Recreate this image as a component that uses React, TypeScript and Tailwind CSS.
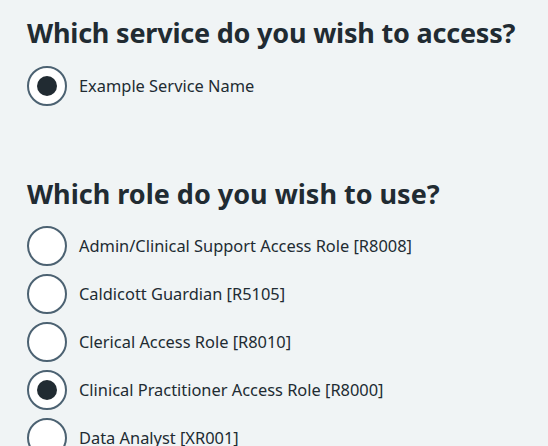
import React, { useState } from "react";

type Option = { id: string; label: string };

const services: Option[] = [{ id: "svc-1", label: "Example Service Name" }];

const roles: Option[] = [
  { id: "R8008", label: "Admin/Clinical Support Access Role [R8008]" },
  { id: "R5105", label: "Caldicott Guardian [R5105]" },
  { id: "R8010", label: "Clerical Access Role [R8010]" },
  { id: "R8000", label: "Clinical Practitioner Access Role [R8000]" },
  { id: "XR001", label: "Data Analyst [XR001]" },
];

const Radio: React.FC<{ option: Option; checked: boolean; onSelect: () => void }> = ({ option, checked, onSelect }) => (
  <label className="flex items-center h-[48px] cursor-pointer" onClick={onSelect}>
    <span className="w-[40px] h-[40px] shrink-0 rounded-full border-2 border-[#4c6272] bg-white flex items-center justify-center">
      {checked && <span className="w-[20px] h-[20px] rounded-full bg-[#212b32]" />}
    </span>
    <span className="ml-[12px] text-[16.4px] leading-[24px] text-[#212b32] whitespace-nowrap">{option.label}</span>
  </label>
);

const App: React.FC = () => {
  const [service, setService] = useState<string>("svc-1");
  const [role, setRole] = useState<string>("R8000");

  return (
    <div className="h-[446px] overflow-hidden bg-[#f0f4f5] px-[27px] pt-[13px]" style={{ fontFamily: '"Noto Sans", Arial, sans-serif' }}>
      <h1 className="text-[27px] leading-[40px] font-bold tracking-[-0.2px] text-[#212b32] mb-[9px] whitespace-nowrap">Which service do you wish to access?</h1>
      <div className="flex flex-col">
        {services.map(s => (
          <Radio key={s.id} option={s} checked={service === s.id} onSelect={() => setService(s.id)} />
        ))}
      </div>
      <h2 className="mt-[64px] text-[27px] leading-[40px] font-bold text-[#212b32] mb-[8px] whitespace-nowrap">Which role do you wish to use?</h2>
      <div className="flex flex-col">
        {roles.map(r => (
          <Radio key={r.id} option={r} checked={role === r.id} onSelect={() => setRole(r.id)} />
        ))}
      </div>
    </div>
  );
};

export default App;
